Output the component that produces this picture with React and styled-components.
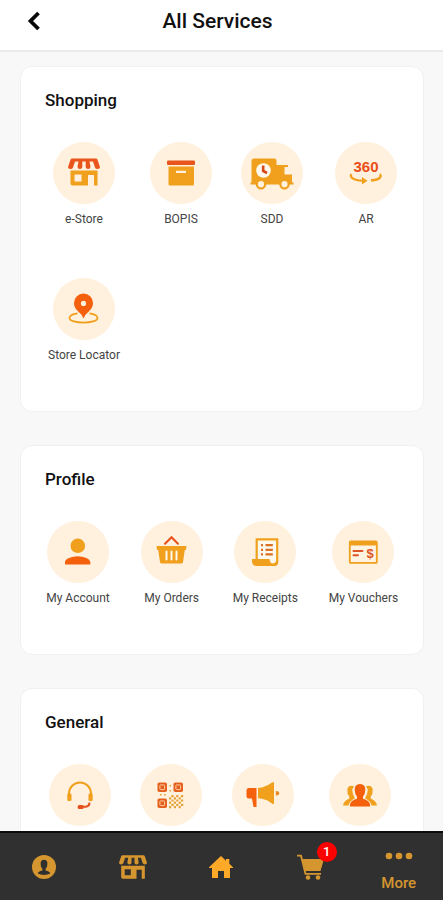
import React from "react";
import styled, { createGlobalStyle } from "styled-components";

const amber = "#f0a01c";
const red = "#f4600c";
const brick = "#e8561c";
const gold = "#d6962f";
const cream = "#fff1dd";

const GlobalStyle = createGlobalStyle`
  * { box-sizing: border-box; }
  body {
    margin: 0;
    background: #f8f8f8;
    font-family: Roboto, "Noto Sans", sans-serif;
  }
  button { font: inherit; }
`;

const Screen = styled.div`
  height: 100vh;
  display: flex;
  flex-direction: column;
  background: #f8f8f8;
`;

const Header = styled.header`
  flex: none;
  display: grid;
  grid-template-columns: 68px 1fr 76px;
  align-items: center;
  height: 52px;
  padding-bottom: 8px;
  background: #fff;
  border-bottom: 2px solid #ebebeb;
`;

const BackButton = styled.button`
  display: flex;
  align-items: center;
  justify-content: center;
  height: 42px;
  padding: 0;
  border: 0;
  background: none;
`;

const PageTitle = styled.h1`
  margin: 0;
  text-align: center;
  font-size: 21px;
  line-height: 24px;
  font-weight: 500;
  color: #111;
`;

const Content = styled.main`
  flex: 1;
  min-height: 0;
  display: flex;
  flex-direction: column;
  gap: 33px;
  padding: 14px 19px 32px 20px;
  overflow-y: auto;
  scrollbar-width: none;
`;

const Card = styled.section`
  flex: none;
  padding: 23px 24px 15px;
  background: #fff;
  border: 1px solid #f0f0f0;
  border-radius: 12px;
`;

const CardTitle = styled.h2`
  margin: 0 0 31px;
  font-size: 17px;
  line-height: 21px;
  font-weight: 500;
  color: #111;
`;

const Services = styled.div`
  display: grid;
  grid-template-columns: ${(p) => p.$columns};
  grid-auto-rows: 118px;
  row-gap: 18px;
  justify-content: space-between;
`;

const Service = styled.button`
  display: flex;
  flex-direction: column;
  align-items: center;
  justify-content: flex-start;
  gap: 7px;
  padding: 0;
  border: 0;
  background: none;
  color: #444;
  font-size: 12px;
  line-height: 16px;
  white-space: nowrap;
`;

const Disc = styled.span`
  flex: none;
  display: block;
  width: 62px;
  height: 62px;
  border-radius: 50%;
  background: ${cream};

  svg { display: block; }
`;

const NavBar = styled.nav`
  flex: none;
  display: grid;
  grid-template-columns: repeat(5, 1fr);
  height: 69px;
  background: #303030;
  border-top: 2px solid #0c0c0c;
`;

const NavItem = styled.button`
  display: flex;
  flex-direction: column;
  align-items: center;
  justify-content: ${(p) => (p.$labelled ? "flex-end" : "center")};
  gap: 14px;
  padding: 0 0 ${(p) => (p.$labelled ? "8px" : "0")};
  border: 0;
  background: none;
  color: ${gold};
  font-size: 15px;
  line-height: 18px;
  font-weight: 500;
`;

const BadgeAnchor = styled.span`
  position: relative;
  display: flex;
`;

const Badge = styled.span`
  position: absolute;
  top: -12px;
  right: -13px;
  width: 20px;
  height: 20px;
  border-radius: 50%;
  background: #fa0202;
  color: #fff;
  text-align: center;
  font-size: 13px;
  line-height: 20px;
`;

const Glyph = ({ children }) => (
  <svg width="62" height="62" viewBox="0 0 62 62" aria-hidden="true">{children}</svg>
);

const StoreShape = ({ roof, wall }) => (
  <>
    <path fill={roof} fillRule="evenodd" d="M4 0H28Q29 0 29.4 1L32 8.5Q32 10.5 29.5 10.5Q27.5 10.5 27 9L25 3H21.5L22.5 8.5Q22.3 10.5 20 10.5Q17.9 10.5 17.7 8.5V3H14.3V8.5Q14.1 10.5 12 10.5Q9.7 10.5 9.5 8.5L10.5 3H7L5 9Q4.5 10.5 2.5 10.5Q0 10.5 0 8.5L2.6 1Q3 0 4 0Z" />
    <path fill={wall} fillRule="evenodd" d="M2.5 12H29.5V27H26V16.5H20V27H4.5Q2.5 27 2.5 25ZM6.5 16V23H13.5V16Z" />
  </>
);

const StoreIcon = () => (
  <Glyph><g transform="translate(15 16.5)"><StoreShape roof={brick} wall={amber} /></g></Glyph>
);

const BoxIcon = () => (
  <Glyph>
    <rect x="17" y="18.5" width="28" height="4.6" rx="1" fill={brick} />
    <path fill={amber} fillRule="evenodd" d="M18.5 24.5H44V42Q44 43.5 42.5 43.5H20Q18.5 43.5 18.5 42ZM27 28.7a1.2 1.2 0 0 0 0 2.4h8a1.2 1.2 0 0 0 0-2.4Z" />
  </Glyph>
);

const TruckIcon = () => (
  <Glyph>
    <path fill={amber} d="M13 16.5H33Q35.5 16.5 35.5 19V23H47V25H43.5V32.5H51V40.5H52.5V42.5H9.5V40.5H10.5V19Q10.5 16.5 13 16.5Z" />
    <circle cx="22.5" cy="28.5" r="7.3" fill="#fff8ec" />
    <path d="M22.2 23.5V29L26 31" fill="none" stroke="#d94716" strokeWidth="2.6" />
    <circle cx="20" cy="42.2" r="4.2" fill={cream} stroke={amber} strokeWidth="2.2" />
    <circle cx="43.5" cy="42.2" r="4.2" fill={cream} stroke={amber} strokeWidth="2.2" />
  </Glyph>
);

const RotateIcon = () => (
  <Glyph>
    <text x="31" y="30" textAnchor="middle" fontFamily="Liberation Sans, sans-serif" fontSize="15" fontWeight="700" fill="#e94e18">360</text>
    <path d="M16.3 32Q14.5 35.5 20 37.5Q23.5 38.8 29 38.8M36 38.5Q43.5 37.7 45 35.5Q46.3 33.7 45 32" fill="none" stroke={amber} strokeWidth="2.3" />
    <path d="M27 35L32.5 38.8L27 42.5Z" fill={amber} />
  </Glyph>
);

const LocatorIcon = () => (
  <Glyph>
    <path d="M24.5 35.3Q16.5 36.5 16.5 40C16.5 46.2 44.5 46.2 44.5 40Q44.5 36.5 36.5 35.3" fill="none" stroke={amber} strokeWidth="1.8" />
    <path fill={red} fillRule="evenodd" d="M30.5 15.5A9.6 9.6 0 0 1 40 25Q40 29.5 36.5 32.8Q32 36.5 30.5 40.5Q29 36.5 24.5 32.8Q21 29.5 21 25A9.6 9.6 0 0 1 30.5 15.5ZM30.5 22.8a2.6 2.6 0 1 0 0 5.2a2.6 2.6 0 0 0 0-5.2Z" />
  </Glyph>
);

const AccountIcon = () => (
  <Glyph>
    <circle cx="30.8" cy="24.8" r="7.3" fill={amber} />
    <path fill={red} d="M18 43.5V41Q18.3 38.5 22 37Q30.5 33.6 39.5 37Q43 38.5 43.3 41V43.5Z" />
  </Glyph>
);

const BasketIcon = () => (
  <Glyph>
    <path d="M24 22.8L30.5 16.2L37 22.8" fill="none" stroke="#e9501b" strokeWidth="2" strokeLinecap="round" />
    <path fill={amber} d="M16.5 25H44.5Q45.7 25 45.5 26.3L44.8 29H43.8L42 41Q41.8 42.5 40.3 42.5H20.7Q19.2 42.5 19 41L17.2 29H16.2L15.5 26.3Q15.3 25 16.5 25Z" />
    <path d="M25.5 30.5V38.5M30.5 30.5V38.5M35.5 30.5V38.5" stroke="#fff8ec" strokeWidth="2" strokeLinecap="round" />
  </Glyph>
);

const ReceiptIcon = () => (
  <Glyph>
    <path d="M22.7 39V18.3H43.2V40.5Q43.2 44 40 44" fill="#fff8ec" stroke={amber} strokeWidth="2.2" />
    <path fill={amber} d="M18 38H35.5Q36 42 38.5 42.5Q41 42.5 42 40.5L43.5 41.5Q43 45 39.5 45H22.5Q18 44.8 18 40Z" />
    <path d="M27 24.2H29M31.5 24.2H38.8M27 28.8H29M31.5 28.8H38.8M27 33.4H29M31.5 33.4H38.8" stroke="#d97025" strokeWidth="2.2" />
  </Glyph>
);

const VoucherIcon = () => (
  <Glyph>
    <rect x="17.8" y="20.3" width="27" height="21.6" rx="1" fill="#fff3e2" stroke={amber} strokeWidth="1.8" />
    <path fill={amber} d="M17.5 20H45V24.5H17.5Z" />
    <path d="M21.5 30H30.5M21.5 34.3H26" stroke="#de5625" strokeWidth="1.9" strokeLinecap="round" />
    <text x="38" y="37" textAnchor="middle" fontFamily="Liberation Sans, sans-serif" fontSize="13" fontWeight="700" fill="#de5625">$</text>
  </Glyph>
);

const HeadsetIcon = () => (
  <Glyph>
    <path d="M20 31V29.5A11 11 0 0 1 42 29.5V31" fill="none" stroke={amber} strokeWidth="2" />
    <rect x="18.3" y="29.5" width="4.2" height="7.5" rx="1.2" fill={amber} />
    <rect x="39.5" y="29.5" width="4.2" height="7.5" rx="1.2" fill={amber} />
    <path d="M40.5 38.5Q40.5 42.3 36.5 42.7H32" fill="none" stroke="#e5501c" strokeWidth="2" />
    <rect x="28.7" y="41" width="6" height="4" rx="1.5" fill="#e5501c" />
  </Glyph>
);

const qrDots = [
  [1, 0], [3, 0], [5, 0], [0, 1], [2, 1], [4, 1], [1, 2], [3, 2], [5, 2],
  [0, 3], [2, 3], [4, 3], [1, 4], [3, 4], [5, 4], [0, 5], [2, 5], [4, 5],
];

const QrIcon = () => (
  <Glyph>
    {[[17.5, 18.5], [33.5, 18.5], [17.5, 34.5]].map(([x, y]) => (
      <g key={`${x}-${y}`} transform={`translate(${x} ${y})`}>
        <rect width="9.5" height="9.5" rx="1.8" fill="#e5601c" />
        <rect x="2.4" y="2.4" width="4.7" height="4.7" rx=".8" fill="none" stroke="#ffd9b4" strokeWidth=".9" />
      </g>
    ))}
    <g fill="#e4a239">
      {qrDots.map(([x, y]) => (
        <rect key={`${x}-${y}`} x={29 + x * 2.4} y={31 + y * 2.2} width="2.2" height="2.2" rx=".5" />
      ))}
      <path d="M20 30h1.6v1.6H20zM24 30h1.6v1.6H24zM29.5 21h1.6v1.6h-1.6zM29.5 26h1.6v1.6h-1.6z" />
    </g>
  </Glyph>
);

const MegaphoneIcon = () => (
  <Glyph>
    <path fill={red} d="M17 24H24.5V43H21.5L20 34.5H17Q14.5 34.5 14.5 32V26.5Q14.5 24 17 24Z" />
    <path fill={amber} d="M26 24L30 23.5Q36.5 21.5 40 18.5Q42 17.2 42 19.2V39Q42 41 40 39.5Q36 36 30 34.8L26 34.3Z" />
    <path fill="#e98b1c" d="M43.8 27Q47.2 27 47.2 29.3Q47.2 31.5 43.8 31.5Z" />
  </Glyph>
);

const PeopleIcon = () => (
  <Glyph>
    <path fill={amber} d="M25 22.2Q19 20.5 18.3 26Q18 30 20.3 32.5V34.5Q14.5 37 14 41.5H19.5Q20.5 37 26 34.3Q23.2 30 23.2 25.5ZM37 22.2Q43 20.5 43.7 26Q44 30 41.7 32.5V34.5Q47.5 37 48 41.5H42.5Q41.5 37 36 34.3Q38.8 30 38.8 25.5Z" />
    <path fill={red} d="M31 20Q36.5 20 36.3 26Q36.2 30 34 32.5V34.8Q40.7 36.7 41 40.5V42.5H21V40.5Q21.3 36.7 28 34.8V32.5Q25.8 30 25.7 26Q25.5 20 31 20Z" />
  </Glyph>
);

const sections = [
  {
    title: "Shopping",
    columns: "78px 60px 66px 66px",
    items: [
      ["e-Store", StoreIcon], ["BOPIS", BoxIcon], ["SDD", TruckIcon], ["AR", RotateIcon],
      ["Store Locator", LocatorIcon],
    ],
  },
  {
    title: "Profile",
    columns: "66px 62px 66px 71px",
    items: [
      ["My Account", AccountIcon], ["My Orders", BasketIcon],
      ["My Receipts", ReceiptIcon], ["My Vouchers", VoucherIcon],
    ],
  },
  {
    title: "General",
    columns: "70px 68px 72px 78px",
    items: [
      [null, HeadsetIcon, "Support"], [null, QrIcon, "QR code"],
      [null, MegaphoneIcon, "Announcements"], [null, PeopleIcon, "Community"],
    ],
  },
];

export default function App() {
  return (
    <Screen>
      <GlobalStyle />
      <Header>
        <BackButton aria-label="Back">
          <svg width="14" height="20" viewBox="0 0 14 20" aria-hidden="true">
            <path d="M11.5 2L3.5 10L11.5 18" fill="none" stroke="#080808" strokeWidth="3.8" />
          </svg>
        </BackButton>
        <PageTitle>All Services</PageTitle>
      </Header>
      <Content>
        {sections.map(({ title, columns, items }) => (
          <Card key={title}>
            <CardTitle>{title}</CardTitle>
            <Services $columns={columns}>
              {items.map(([label, Icon, name]) => (
                <Service key={label || name} aria-label={name}>
                  <Disc><Icon /></Disc>
                  {label}
                </Service>
              ))}
            </Services>
          </Card>
        ))}
      </Content>
      <NavBar>
        <NavItem aria-label="Account">
          <svg width="24" height="24" viewBox="0 0 24 24" aria-hidden="true">
            <circle cx="12" cy="12" r="12" fill={gold} />
            <path fill="#303030" d="M12 4.8Q15.4 4.8 15.4 9Q15.4 12 13.6 13.8V15.6Q17.8 16.4 18.3 18.6Q12 21.5 5.7 18.6Q6.2 16.4 10.4 15.6V13.8Q8.6 12 8.6 9Q8.6 4.8 12 4.8Z" />
          </svg>
        </NavItem>
        <NavItem aria-label="Store">
          <svg width="28" height="24" viewBox="0 0 32 27" aria-hidden="true">
            <StoreShape roof={gold} wall={gold} />
          </svg>
        </NavItem>
        <NavItem aria-label="Home">
          <svg width="24" height="22" viewBox="0 0 24 22" aria-hidden="true">
            <path fill="#ffa928" d="M12 0L17 4.7V3H20.3V7.8L24 11.3V12H21V22H15V15H9V22H3V12H0V11.3Z" />
          </svg>
        </NavItem>
        <NavItem aria-label="Cart, 1 item">
          <BadgeAnchor>
            <svg width="27" height="26" viewBox="0 0 27 26" aria-hidden="true">
              <path d="M0 1.7H4L8.5 19.8H24" fill="none" stroke={gold} strokeWidth="1.8" />
              <path fill={gold} d="M5.2 5H27L23.5 17H8.3Z" />
              <circle cx="11" cy="23.5" r="2.3" fill={gold} />
              <circle cx="21" cy="23.5" r="2.3" fill={gold} />
            </svg>
            <Badge>1</Badge>
          </BadgeAnchor>
        </NavItem>
        <NavItem $labelled>
          <svg width="28" height="8" viewBox="0 0 28 8" aria-hidden="true">
            <g fill={gold}><circle cx="4" cy="4" r="3.3" /><circle cx="14" cy="4" r="3.3" /><circle cx="24" cy="4" r="3.3" /></g>
          </svg>
          More
        </NavItem>
      </NavBar>
    </Screen>
  );
}
